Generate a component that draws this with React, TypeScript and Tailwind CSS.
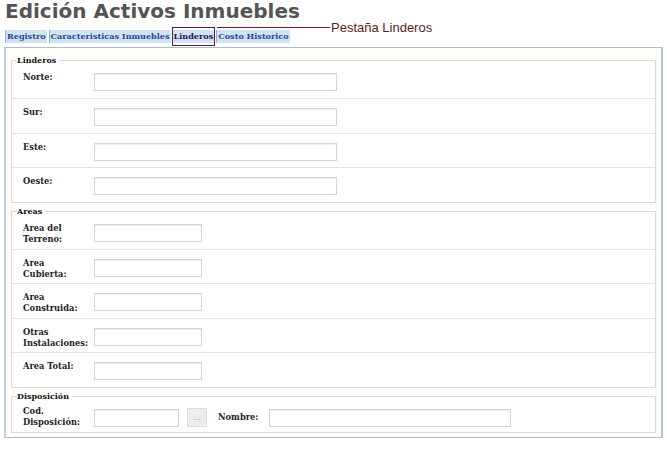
const serif = "font-['DejaVu_Serif',serif]";

function Label({ lines }: { lines: string[] }) {
  return (
    <div className="w-[71px] -mt-[1px] whitespace-nowrap text-[8.3px] font-bold leading-[11px] text-[#222]">
      {lines.map((l, i) => (
        <div key={i}>{l}</div>
      ))}
    </div>
  );
}

function Row({ lines, first, inputW }: { lines: string[]; first?: boolean; inputW: string }) {
  return (
    <div
      className={
        first
          ? "flex h-[32px] items-start pl-[11px] pt-[7px]"
          : "flex h-[34.5px] items-start border-t border-[#e3e3e3] pl-[11px] pt-[9px]"
      }
    >
      <Label lines={lines} />
      <div className={`h-[18px] border border-[#d4d4d4] bg-white shadow-[inset_0_1px_1px_#eee] ${inputW}`} />
    </div>
  );
}

function Group({ title, children, className = "" }: { title: string; children: React.ReactNode; className?: string }) {
  return (
    <fieldset className={`border border-[#dadada] bg-white ${className}`}>
      <legend className="ml-[5px] pr-[3px] text-[8px] font-bold leading-[11px] text-[#111]">{title}</legend>
      {children}
    </fieldset>
  );
}

const linderos = [["Norte:"], ["Sur:"], ["Este:"], ["Oeste:"]];
const areas = [["Area del", "Terreno:"], ["Area", "Cubierta:"], ["Area", "Construida:"], ["Otras", "Instalaciones:"], ["Area Total:"]];

function Tab({ children }: { children: React.ReactNode }) {
  return (
    <span className="h-[13px] border-l border-[#8fb0d6] bg-[#d3e2f3] px-[1px] text-[8.1px] font-bold leading-[13px] text-[#1a4d92]">
      {children}
    </span>
  );
}

export default function App() {
  return (
    <div className={`relative h-[450px] w-[667px] overflow-hidden bg-white ${serif}`}>
      <h1 className="h-[22px] pl-[5px] font-['DejaVu_Sans',sans-serif] text-[20px] font-bold leading-[22px] text-[#545454]">
        Edición Activos Inmuebles
      </h1>

      <div className="mt-[5px] flex h-[19px] items-center pl-[5px]">
        <Tab>Registro</Tab>
        <span className="w-[2px]" />
        <Tab>Caracteristicas Inmuebles</Tab>
        <span className="w-[1px]" />
        <span className="flex h-[19px] items-center border border-[#4d1f45]">
          <span className="h-[13px] bg-[#d3e2f3] px-[1px] text-[8.1px] font-bold leading-[13px] text-[#121a55]">
            Linderos
          </span>
        </span>
        <span className="w-[1px]" />
        <Tab>Costo Historico</Tab>
      </div>

      {/* annotation */}
      <div className="absolute left-[217px] top-[27px] h-[1px] w-[113px] bg-[#6b1f2b]" />
      <div className="absolute left-[331px] top-[20px] font-['Liberation_Sans',sans-serif] text-[13px] leading-[16px] text-[#5a1e1e]">
        Pestaña Linderos
      </div>

      <div className="ml-[4px] mt-[1px] w-[659px] border border-l-2 border-r-2 border-[#a9bccc] border-l-[#bcd1e3] border-r-[#b3c5d3] bg-[#fdfdf9] px-[5px] pb-[4px] pt-[7px]">
        <Group title="Linderos">
          {linderos.map((l, i) => (
            <Row key={i} lines={l} first={i === 0} inputW="w-[243px]" />
          ))}
        </Group>

        <Group title="Areas" className="mt-[3px]">
          {areas.map((l, i) => (
            <Row key={i} lines={l} first={i === 0} inputW="w-[108px]" />
          ))}
        </Group>

        <Group title="Disposición" className="mt-[3px]">
          <div className="flex h-[30px] items-center pl-[11px] pt-[2px]">
            <Label lines={["Cod.", "Disposición:"]} />
            <div className="h-[18px] w-[85px] border border-[#d4d4d4] bg-white shadow-[inset_0_1px_1px_#eee]" />
            <div className="ml-[8px] flex h-[19px] w-[20px] items-center justify-center border border-[#dcdcdc] bg-[#ededed] text-[8px] leading-none text-[#888]">
              ...
            </div>
            <div className="ml-[11px] w-[51px] text-[8.3px] font-bold leading-[11px] text-[#222]">Nombre:</div>
            <div className="h-[18px] w-[242px] border border-[#d4d4d4] bg-white shadow-[inset_0_1px_1px_#eee]" />
          </div>
        </Group>
      </div>
    </div>
  );
}
